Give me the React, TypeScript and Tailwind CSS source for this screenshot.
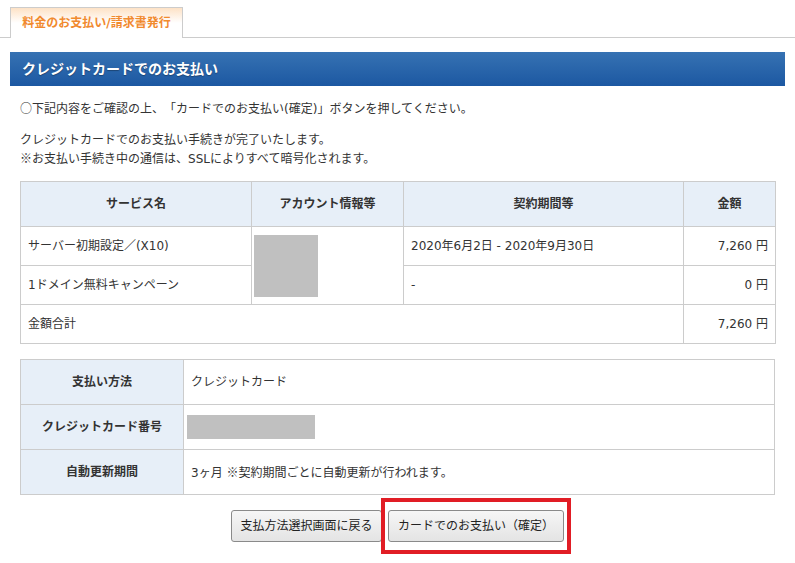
const font = { fontFamily: '"DejaVu Sans", "Noto Sans CJK JP", sans-serif' };
const cjk = { fontFamily: '"Noto Sans CJK JP", sans-serif' };

const items = [
  { name: 'サーバー初期設定／(X10)', period: '2020年6月2日 - 2020年9月30日', price: '7,260 円' },
  { name: '1ドメイン無料キャンペーン', period: '-', price: '0 円' },
];

export default function App() {
  return (
    <div className="min-h-[563px] bg-white text-[12px] text-[#333] [text-spacing-trim:space-all]" style={font}>
      {/* tabs */}
      <div className="pt-[7px] border-b border-[#cccccc]">
        <div className="ml-[10px] -mb-px flex h-[31px] w-[173px] items-center justify-center border border-b-0 border-[#cccccc] bg-gradient-to-b from-[#fde2c6] via-white to-white">
          <span className="text-[12px] font-bold text-[#f18a2e]">料金のお支払い/請求書発行</span>
        </div>
      </div>

      <div className="mx-[10px] mt-[14px]">
        <div className="flex h-[34px] items-center bg-gradient-to-b from-[#3672b3] to-[#1c58a2] px-[12px]">
          <h1 className="text-[14px] font-bold text-white [text-shadow:0_1px_1px_rgba(0,0,0,0.3)]">
            クレジットカードでのお支払い
          </h1>
        </div>

        <div className="px-[10px]">
          <p className="mt-[13px] leading-[18px]">
            <span style={cjk}>○</span>下記内容をご確認の上、「カードでのお支払い(確定)」ボタンを押してください。
          </p>
          <p className="mt-[14px] leading-[17px]">
            クレジットカードでのお支払い手続きが完了いたします。
            <br />
            <span style={cjk}>※</span>お支払い手続き中の通信は、SSLによりすべて暗号化されます。
          </p>

          <table className="mt-[13px] w-[755px] table-fixed border-collapse">
            <colgroup>
              <col className="w-[231px]" />
              <col className="w-[152px]" />
              <col className="w-[280px]" />
              <col className="w-[92px]" />
            </colgroup>
            <thead>
              <tr className="h-[45px] bg-[#e7eff8]">
                <th className="border border-[#cccccc] font-bold">サービス名</th>
                <th className="border border-[#cccccc] font-bold">アカウント情報等</th>
                <th className="border border-[#cccccc] font-bold">契約期間等</th>
                <th className="border border-[#cccccc] font-bold">金額</th>
              </tr>
            </thead>
            <tbody>
              {items.map((item, i) => (
                <tr key={item.name} className="h-[39px]">
                  <td className="border border-[#cccccc] px-[7px]">{item.name}</td>
                  {i === 0 && (
                    <td rowSpan={2} className="border border-[#cccccc] px-[2px] align-middle">
                      <div className="h-[62px] w-[64px] bg-[#c0c0c0]" />
                    </td>
                  )}
                  <td className="border border-[#cccccc] px-[7px]">{item.period}</td>
                  <td className="border border-[#cccccc] px-[7px] text-right">{item.price}</td>
                </tr>
              ))}
              <tr className="h-[39px]">
                <td colSpan={3} className="border border-[#cccccc] px-[7px]">金額合計</td>
                <td className="border border-[#cccccc] px-[7px] text-right">7,260 円</td>
              </tr>
            </tbody>
          </table>

          <table className="mt-[15px] w-[755px] table-fixed border-collapse">
            <colgroup>
              <col className="w-[163px]" />
              <col />
            </colgroup>
            <tbody>
              <tr className="h-[45px]">
                <th className="border border-[#cccccc] bg-[#e7eff8] font-bold">支払い方法</th>
                <td className="border border-[#cccccc] px-[7px]">クレジットカード</td>
              </tr>
              <tr className="h-[45px]">
                <th className="border border-[#cccccc] bg-[#e7eff8] font-bold">クレジットカード番号</th>
                <td className="border border-[#cccccc] px-[3px]">
                  <div className="h-[24px] w-[128px] bg-[#c0c0c0]" />
                </td>
              </tr>
              <tr className="h-[45px]">
                <th className="border border-[#cccccc] bg-[#e7eff8] font-bold">自動更新期間</th>
                <td className="border border-[#cccccc] px-[7px]">
                  3ヶ月 <span style={cjk}>※</span>契約期間ごとに自動更新が行われます。
                </td>
              </tr>
            </tbody>
          </table>
        </div>

        <div className="mt-[15px] flex justify-center gap-[6px]">
          <button className="h-[32px] w-[151px] rounded-[3px] border border-[#8a8a8a] bg-gradient-to-b from-[#f6f6f6] to-[#e4e4e4] text-[12px] text-[#222]">
            支払方法選択画面に戻る
          </button>
          <div className="relative">
            <button className="h-[32px] w-[176px] rounded-[3px] border border-[#8a8a8a] bg-gradient-to-b from-[#f6f6f6] to-[#e4e4e4] text-[12px] text-[#222]">
              カードでのお支払い（確定）
            </button>
            <span className="pointer-events-none absolute -left-[7px] -right-[7px] -top-[12px] -bottom-[12px] border-4 border-[#e11d25]" />
          </div>
        </div>
      </div>
    </div>
  );
}
